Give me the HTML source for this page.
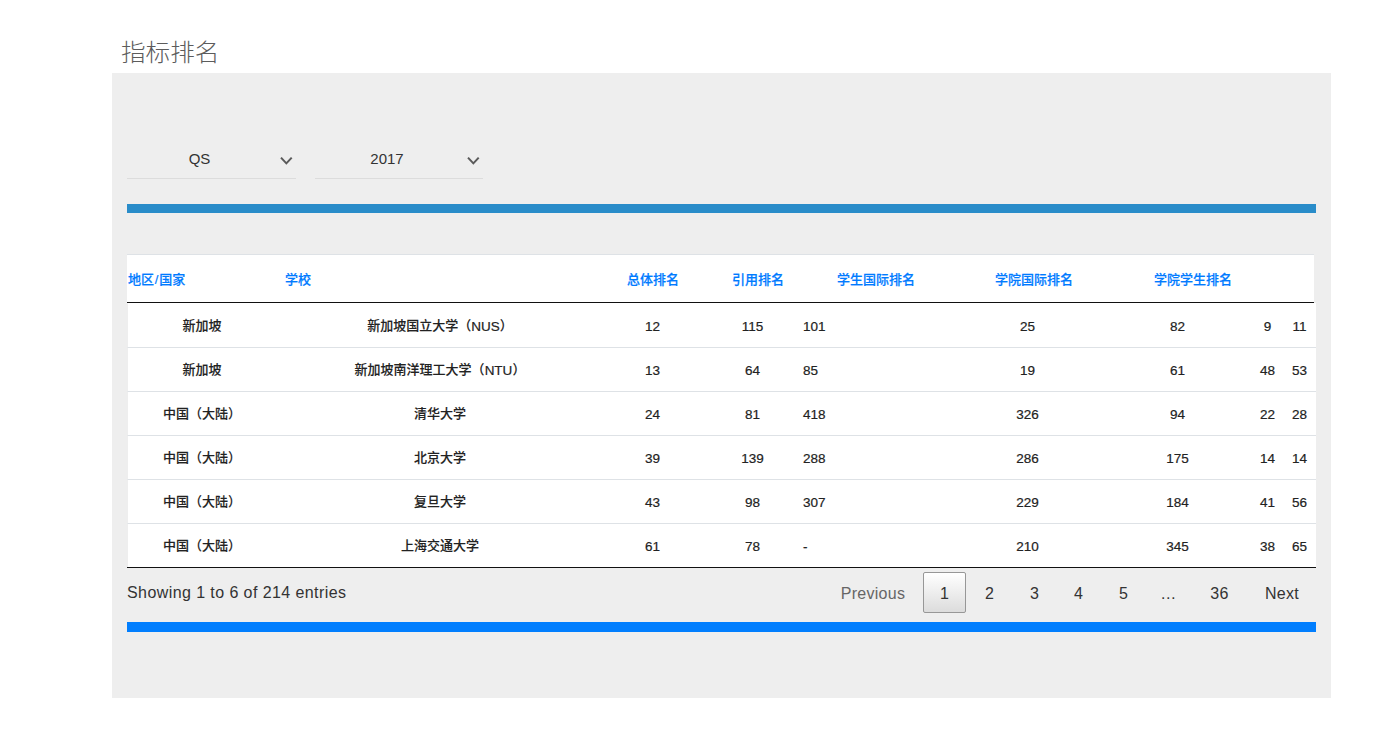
<!DOCTYPE html>
<html lang="zh-CN">
<head>
<meta charset="utf-8">
<title>指标排名</title>
<style>
  * { box-sizing: border-box; }
  html, body { margin: 0; padding: 0; background: #fff; }
  body {
    width: 1394px; height: 744px; position: relative; overflow: hidden;
    font-family: "Liberation Sans", "Noto Sans CJK SC", sans-serif;
    color: #333;
  }
  h2.title {
    position: absolute; left: 121px; top: 35px; margin: 0;
    font-size: 24.6px; line-height: 36px; font-weight: 300; color: #5c5c5c; transform: scaleY(0.95); transform-origin: 0 78%;
    font-family: "Liberation Sans", "Noto Sans CJK SC", sans-serif;
  }
  .panel { position: absolute; left: 112px; top: 73px; width: 1219px; height: 625px; background: #eeeeee; }

  /* selects */
  .sel {
    position: absolute; top: 139px; height: 40px; border-bottom: 1px solid #dcdcdc;
    font-size: 15px; line-height: 40px; color: #333; text-align: center; padding-right: 24px;
  }
  .sel svg { position: absolute; top: 17px; right: 3px; }
  #sel1 { left: 127px; width: 169px; }
  #sel2 { left: 315px; width: 168px; }

  .bar1 { position: absolute; left: 127px; top: 204px; width: 1189px; height: 9px; background: #298cc9; }
  .bar2 { position: absolute; left: 127px; top: 622px; width: 1189px; height: 10px; background: #017efe; }

  /* header */
  .thead {
    position: absolute; left: 127px; top: 254px; width: 1187px; height: 49px;
    background: #fff; border-top: 1px solid #dee2e6; border-bottom: 1px solid #111;
  }
  .thead span {
    position: absolute; top: 14px; line-height: 22px; font-size: 13px; font-weight: 500; -webkit-text-stroke: 0.2px #007bff; color: #007bff; white-space: nowrap;
  }

  .thead i { font-style: normal; margin: 0 0.8px; }

  /* body */
  table.tb {
    position: absolute; left: 127px; top: 303px; width: 1189px; border-collapse: separate; border-spacing: 0; table-layout: fixed;
    border-bottom: 1px solid #111;
  }
  table.tb td {
    height: 44px; padding: 2px 0 0 0; font-size: 13px; font-weight: 500; -webkit-text-stroke: 0.12px #222; color: #222; text-align: center;
    border-top: 1px solid #dee2e6; white-space: nowrap; line-height: 20px; vertical-align: middle; background: #fff;
  }
  table.tb tr:first-child td { border-top-color: #fff; }
  table.tb td:first-child { border-left: 1px solid #eee; padding-right: 1px; }
  table.tb td:nth-child(-n+2) { padding-top: 1px; }
  table.tb td span.n { position: relative; top: 0.8px; }
  table.tb td.l { text-align: left; }
  table.tb .n { font-weight: normal; font-size: 13.5px; -webkit-text-stroke: 0.2px #222; }

  .info { position: absolute; left: 127px; top: 581px; letter-spacing: 0.42px; font-size: 16px; line-height: 24px; color: #333; white-space: nowrap; }

  .pg { position: absolute; top: 572px; height: 41px; line-height: 41px; font-size: 16px; letter-spacing: 0.3px; color: #333; text-align: center; border: 1px solid transparent; border-radius: 2px; white-space: nowrap; }
  .pg.dis { color: #666; }
  .pg.cur { border-color: #979797; background: linear-gradient(to bottom, #ffffff 0%, #dcdcdc 100%); }
</style>
</head>
<body>
  <h2 class="title">指标排名</h2>
  <div class="panel"></div>

  <div class="sel" id="sel1">QS
    <svg width="14" height="10" viewBox="0 0 14 10"><path d="M2 1.6 L7.35 7.4 L12.7 1.6" fill="none" stroke="#5a5a5a" stroke-width="2" stroke-linejoin="miter"/></svg>
  </div>
  <div class="sel" id="sel2">2017
    <svg width="14" height="10" viewBox="0 0 14 10"><path d="M2 1.6 L7.35 7.4 L12.7 1.6" fill="none" stroke="#5a5a5a" stroke-width="2" stroke-linejoin="miter"/></svg>
  </div>

  <div class="bar1"></div>

  <div class="thead">
    <span style="left:1px">地区<i>/</i>国家</span>
    <span style="left:158px">学校</span>
    <span style="left:500px">总体排名</span>
    <span style="left:605px">引用排名</span>
    <span style="left:710px">学生国际排名</span>
    <span style="left:868px">学院国际排名</span>
    <span style="left:1027px">学院学生排名</span>
  </div>

  <table class="tb">
    <colgroup>
      <col style="width:150px"><col style="width:326px"><col style="width:99px"><col style="width:101px">
      <col style="width:149px"><col style="width:151px"><col style="width:149px"><col style="width:31px"><col style="width:33px">
    </colgroup>
    <tr><td>新加坡</td><td>新加坡国立大学（<span class="n">NUS</span>）</td><td class="n">12</td><td class="n">115</td><td class="n l">101</td><td class="n">25</td><td class="n">82</td><td class="n">9</td><td class="n">11</td></tr>
    <tr><td>新加坡</td><td>新加坡南洋理工大学（<span class="n">NTU</span>）</td><td class="n">13</td><td class="n">64</td><td class="n l">85</td><td class="n">19</td><td class="n">61</td><td class="n">48</td><td class="n">53</td></tr>
    <tr><td>中国（大陆）</td><td>清华大学</td><td class="n">24</td><td class="n">81</td><td class="n l">418</td><td class="n">326</td><td class="n">94</td><td class="n">22</td><td class="n">28</td></tr>
    <tr><td>中国（大陆）</td><td>北京大学</td><td class="n">39</td><td class="n">139</td><td class="n l">288</td><td class="n">286</td><td class="n">175</td><td class="n">14</td><td class="n">14</td></tr>
    <tr><td>中国（大陆）</td><td>复旦大学</td><td class="n">43</td><td class="n">98</td><td class="n l">307</td><td class="n">229</td><td class="n">184</td><td class="n">41</td><td class="n">56</td></tr>
    <tr><td>中国（大陆）</td><td>上海交通大学</td><td class="n">61</td><td class="n">78</td><td class="n l">-</td><td class="n">210</td><td class="n">345</td><td class="n">38</td><td class="n">65</td></tr>
  </table>

  <div class="info">Showing 1 to 6 of 214 entries</div>

  <div class="pg dis" style="left:824px;width:98px">Previous</div>
  <div class="pg cur" style="left:923px;width:43px">1</div>
  <div class="pg" style="left:968px;width:43px">2</div>
  <div class="pg" style="left:1013px;width:43px">3</div>
  <div class="pg" style="left:1057px;width:43px">4</div>
  <div class="pg" style="left:1102px;width:43px">5</div>
  <div class="pg" style="left:1145px;width:47px">…</div>
  <div class="pg" style="left:1194px;width:51px">36</div>
  <div class="pg" style="left:1248px;width:68px">Next</div>

  <div class="bar2"></div>
</body>
</html>
